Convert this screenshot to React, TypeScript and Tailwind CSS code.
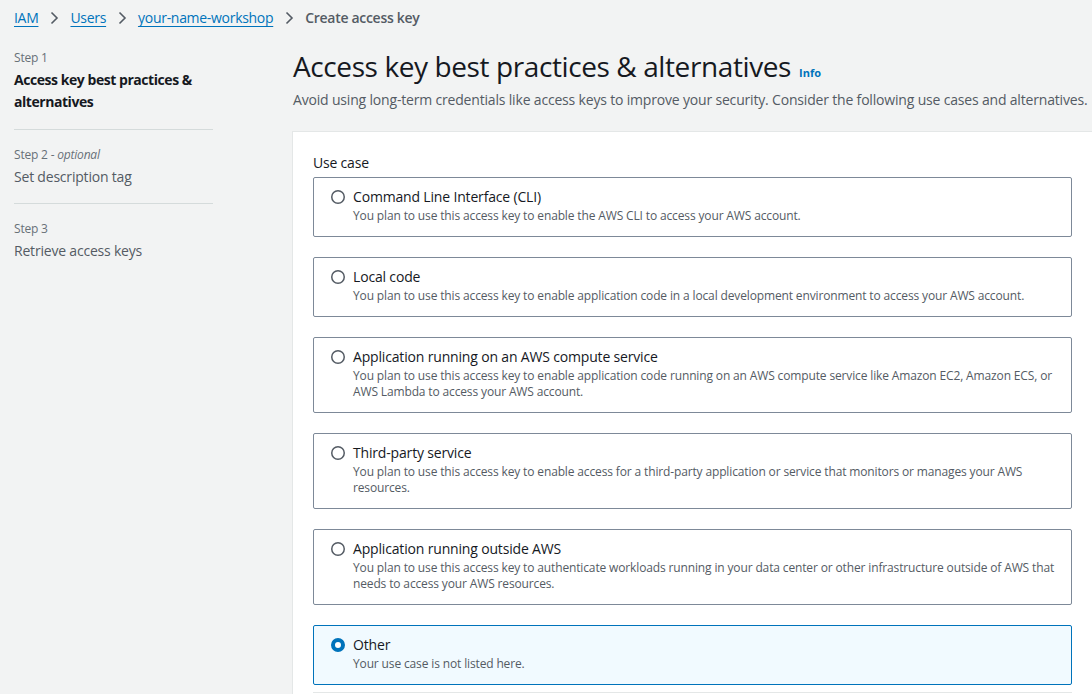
import React from "react";

const font = { fontFamily: '"Open Sans", "Noto Sans", Arial, sans-serif' };

function Chevron() {
  return (
    <svg width="10" height="14" viewBox="0 0 10 14" className="mx-[11px] shrink-0">
      <path d="M2.5 1.5 L8 7 L2.5 12.5" fill="none" stroke="#545b64" strokeWidth="1.6" />
    </svg>
  );
}

type Opt = { title: string; desc: string; selected?: boolean };

const options: Opt[] = [
  { title: "Command Line Interface (CLI)", desc: "You plan to use this access key to enable the AWS CLI to access your AWS account." },
  { title: "Local code", desc: "You plan to use this access key to enable application code in a local development environment to access your AWS account." },
  {
    title: "Application running on an AWS compute service",
    desc: "You plan to use this access key to enable application code running on an AWS compute service like Amazon EC2, Amazon ECS, or AWS Lambda to access your AWS account.",
  },
  {
    title: "Third-party service",
    desc: "You plan to use this access key to enable access for a third-party application or service that monitors or manages your AWS resources.",
  },
  {
    title: "Application running outside AWS",
    desc: "You plan to use this access key to authenticate workloads running in your data center or other infrastructure outside of AWS that needs to access your AWS resources.",
  },
  { title: "Other", desc: "Your use case is not listed here.", selected: true },
];

function Radio({ selected }: { selected?: boolean }) {
  if (selected) {
    return (
      <svg width="14" height="14" viewBox="0 0 14 14" className="shrink-0 mt-[3px]">
        <circle cx="7" cy="7" r="5" fill="#fff" stroke="#0073bb" strokeWidth="4" />
      </svg>
    );
  }
  return (
    <svg width="14" height="14" viewBox="0 0 14 14" className="shrink-0 mt-[3px]">
      <circle cx="7" cy="7" r="6.25" fill="#fff" stroke="#545b64" strokeWidth="1.5" />
    </svg>
  );
}

function Card({ o }: { o: Opt }) {
  return (
    <div
      className={
        "flex gap-[8px] rounded-[2px] border pl-[17px] pr-[16px] pt-[9px] pb-[12px] " +
        (o.selected ? "border-[#0073bb] bg-[#f1faff]" : "border-[#7d8998] bg-white")
      }
    >
      <Radio selected={o.selected} />
      <div className="flex flex-col">
        <div className="text-[14px] leading-[20px] tracking-[-0.17px] text-[#16191f]">{o.title}</div>
        <div className="mt-[1px] text-[12px] leading-[16px] tracking-[-0.14px] text-[#545b64]">{o.desc}</div>
      </div>
    </div>
  );
}

export default function App() {
  return (
    <div className="min-h-[694px] w-full overflow-hidden bg-[#f2f3f3]" style={font}>
      <div className="flex items-center pl-[14px] pt-[8px] h-[20px] box-content text-[14px] leading-[20px] tracking-[-0.3px]">
        <span className="text-[#0073bb] underline underline-offset-[3px]">IAM</span>
        <Chevron />
        <span className="text-[#0073bb] underline underline-offset-[3px]">Users</span>
        <Chevron />
        <span className="text-[#0073bb] underline underline-offset-[3px]">your-name-workshop</span>
        <Chevron />
        <span className="font-semibold text-[#545b64]">Create access key</span>
      </div>
      <div className="flex pt-[20px]">
        <nav className="w-[199px] ml-[14px] shrink-0 tracking-[-0.2px]">
          <div className="pt-[2px] pb-[16px] border-b border-[#d5dbdb]">
            <div className="text-[12px] leading-[16px] text-[#687078]">Step 1</div>
            <div className="mt-[3px] text-[14px] leading-[22px] font-bold tracking-[-0.45px] text-[#16191f]">
              Access key best practices &amp; alternatives
            </div>
          </div>
          <div className="pt-[17px] pb-[15px] border-b border-[#d5dbdb]">
            <div className="text-[12px] leading-[16px] text-[#687078]">
              Step 2 - <i>optional</i>
            </div>
            <div className="mt-[3px] text-[14px] leading-[22px] text-[#545b64]">Set description tag</div>
          </div>
          <div className="pt-[17px]">
            <div className="text-[12px] leading-[16px] text-[#687078]">Step 3</div>
            <div className="mt-[3px] text-[14px] leading-[22px] text-[#545b64]">Retrieve access keys</div>
          </div>
        </nav>
        <main className="ml-[80px] flex-1 min-w-0">
          <div className="flex items-baseline -mt-[2px]">
            <h1 className="text-[28px] leading-[40px] text-[#16191f] font-normal tracking-[-0.4px]">
              Access key best practices &amp; alternatives
            </h1>
            <span className="ml-[8px] text-[11px] font-bold text-[#0073bb]">Info</span>
          </div>
          <p className="mt-[4px] text-[14px] leading-[20px] tracking-[-0.18px] text-[#545b64] whitespace-nowrap">
            Avoid using long-term credentials like access keys to improve your security. Consider the following use cases and alternatives.
          </p>
          <div className="mt-[21px] -ml-px bg-white border-l border-t border-[#e4e7e7] px-[20px] pt-[21px]">
            <div className="text-[14px] leading-[20px] tracking-[-0.2px] text-[#16191f]">Use case</div>
            <div className="mt-[4px] flex flex-col gap-[20px]">
              {options.map((o) => (
                <Card key={o.title} o={o} />
              ))}
            </div>
            <div className="mt-[7px] border-t border-[#e4e7e7] h-[20px]" />
          </div>
        </main>
      </div>
    </div>
  );
}
